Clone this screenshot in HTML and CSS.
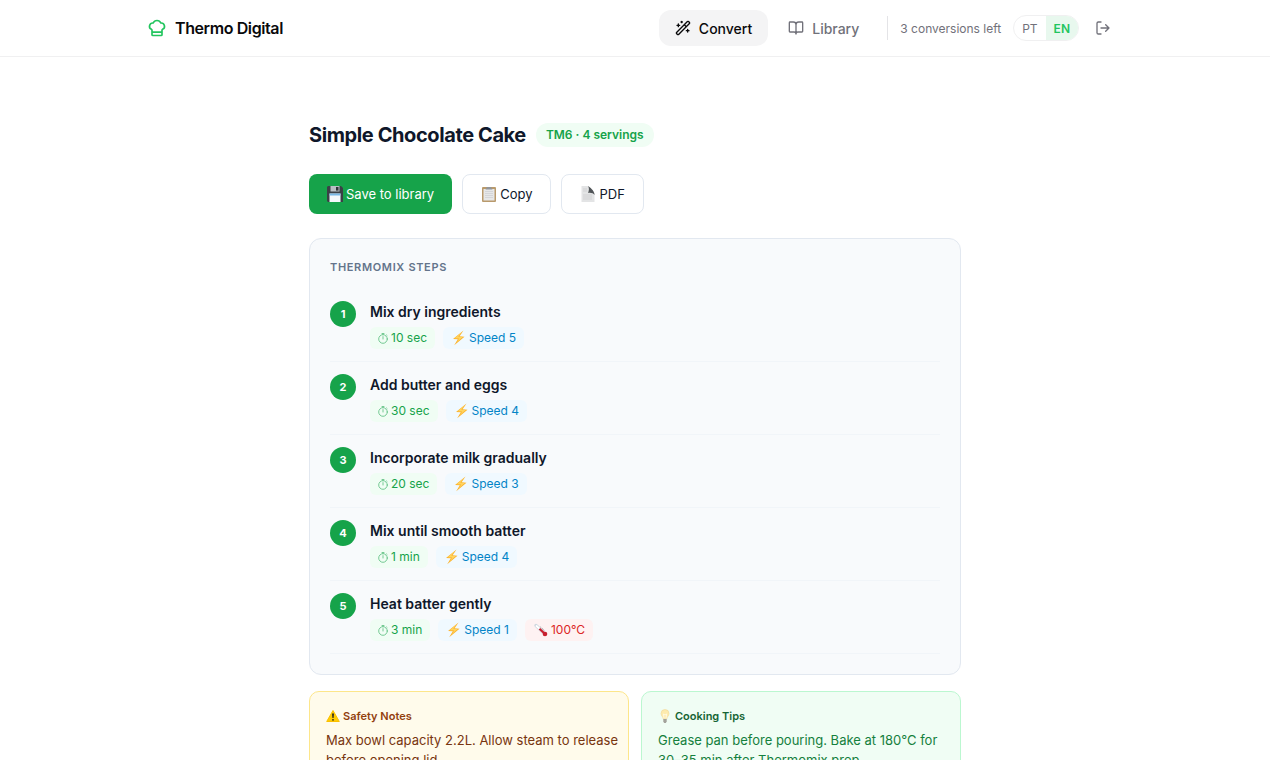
FILE: index.html
```
<!DOCTYPE html>
<html lang="en">
<head>
    <meta charset="UTF-8">
    <meta name="viewport" content="width=device-width, initial-scale=1.0">
    <title>Thermo Digital</title>
    <link rel="stylesheet" href="styles.css">
</head>
<body>
    <!-- Shared icons -->
    <svg class="sprite" aria-hidden="true">
        <symbol id="timer" viewBox="0 0 10 11">
            <g fill="none" stroke="#16a34a" stroke-width="0.8" stroke-linecap="round">
                <circle cx="5" cy="6" r="4.3"/>
                <path d="M5 3.600v2.400M4 .600h2M5 .600v1M8.600 2l.5.5"/>
            </g>
        </symbol>
        <symbol id="bolt" viewBox="0 0 15 16">
            <path d="M12.500 .500 2 8.900l4.800.4L3.200 15.300 13.500 6.800l-4.900-.5z" fill="#fcb22c"/>
            <path d="M11.200 2 3.600 8.300l4.600.3L5.400 12.500l6.400-5.400-4.600-.3z" fill="#ffd45e"/>
        </symbol>
    </svg>

    <header class="header">
        <div class="header-inner">
            <a class="brand" href="#">
                <svg class="brand-icon" viewBox="0 0 24 24"><path d="M17 21a1 1 0 0 0 1-1v-5.35c0-.457.316-.844.727-1.041a4 4 0 0 0-2.134-7.589 5 5 0 0 0-9.186 0 4 4 0 0 0-2.134 7.588c.411.198.727.585.727 1.041V20a1 1 0 0 0 1 1ZM6 17h12"/></svg>
                Thermo Digital
            </a>
            <nav class="nav">
                <a class="nav-link active" href="#">
                    <svg class="icon" viewBox="0 0 24 24"><path d="m21.64 3.64-1.28-1.28a1.21 1.21 0 0 0-1.72 0L2.36 18.64a1.21 1.21 0 0 0 0 1.72l1.28 1.28a1.2 1.2 0 0 0 1.72 0L21.64 5.36a1.2 1.2 0 0 0 0-1.72M14 7l3 3M5 6v4M19 14v4M10 2v2M7 8H3M21 16h-4M11 3H9"/></svg>
                    Convert
                </a>
                <a class="nav-link" href="#">
                    <svg class="icon" viewBox="0 0 24 24"><path d="M12 7v14M3 18a1 1 0 0 1-1-1V4a1 1 0 0 1 1-1h5a4 4 0 0 1 4 4 4 4 0 0 1 4-4h5a1 1 0 0 1 1 1v13a1 1 0 0 1-1 1h-6a3 3 0 0 0-3 3 3 3 0 0 0-3-3z"/></svg>
                    Library
                </a>
                <div class="account">
                    <span class="quota">3 conversions left</span>
                    <div class="lang">
                        <button type="button">PT</button>
                        <button type="button" class="selected">EN</button>
                    </div>
                </div>
                <button class="logout" type="button" aria-label="Log out">
                    <svg class="icon" viewBox="0 0 24 24"><path d="M9 21H5a2 2 0 0 1-2-2V5a2 2 0 0 1 2-2h4M16 17l5-5-5-5M21 12H9"/></svg>
                </button>
            </nav>
        </div>
    </header>

    <main class="main">
        <div class="title-row">
            <h1>Simple Chocolate Cake</h1>
            <span class="badge">TM6 · 4 servings</span>
        </div>

        <div class="actions">
            <button class="btn btn-primary" type="button">
                <svg class="emoji" viewBox="0 0 16 16">
                    <path d="M1 0h13l2 2v14H1L0 15V1z" fill="#3b4046"/>
                    <path d="M3.500 0h9v5.500h-9z" fill="#b9bec4"/>
                    <path d="M9 1h2.500v3.600H9z" fill="#30343a"/>
                    <path d="M2.500 7.500h11V16h-11z" fill="#f4f8fb"/>
                    <path d="M2.500 7.500h11v2h-11z" fill="#79b8e6"/>
                </svg>
                Save to library
            </button>
            <button class="btn" type="button">
                <svg class="emoji" viewBox="0 0 16 16">
                    <rect x="1" y="1" width="14" height="15" rx="1" fill="#b99a6c"/>
                    <path d="M2.500 3h11v11.500h-11z" fill="#e6e7e8"/>
                    <path d="M4 5.500h8M4 7.500h8M4 9.500h8M4 11.500h8" stroke="#cfd1d3" stroke-width="0.8"/>
                    <path d="M4.500 3.500 6 1h4l1.500 2.500z" fill="#92959a"/>
                </svg>
                Copy
            </button>
            <button class="btn" type="button">
                <svg class="emoji" viewBox="0 0 16 16">
                    <path d="M1.500 0H8l6.500 7v9h-13z" fill="#e3e4e5"/>
                    <path d="M3 3h4M3 5h4M3 9h9M3 11h9M3 13h9" stroke="#c8cacc" stroke-width="0.7"/>
                    <path d="M8 0c1.500 2 1 5 0 7 2.500-.5 5.500 0 6.500 2 .2-3-2.500-6.500-6.500-9z" fill="#505457"/>
                </svg>
                PDF
            </button>
        </div>

        <section class="steps">
            <h2>Thermomix Steps</h2>
            <div class="step">
                <div class="step-number">1</div>
                <div>
                    <h3>Mix dry ingredients</h3>
                    <div class="tags">
                        <span class="tag time"><svg><use href="#timer"/></svg>10 sec</span>
                        <span class="tag speed"><svg><use href="#bolt"/></svg>Speed 5</span>
                    </div>
                </div>
            </div>
            <div class="step">
                <div class="step-number">2</div>
                <div>
                    <h3>Add butter and eggs</h3>
                    <div class="tags">
                        <span class="tag time"><svg><use href="#timer"/></svg>30 sec</span>
                        <span class="tag speed"><svg><use href="#bolt"/></svg>Speed 4</span>
                    </div>
                </div>
            </div>
            <div class="step">
                <div class="step-number">3</div>
                <div>
                    <h3>Incorporate milk gradually</h3>
                    <div class="tags">
                        <span class="tag time"><svg><use href="#timer"/></svg>20 sec</span>
                        <span class="tag speed"><svg><use href="#bolt"/></svg>Speed 3</span>
                    </div>
                </div>
            </div>
            <div class="step">
                <div class="step-number">4</div>
                <div>
                    <h3>Mix until smooth batter</h3>
                    <div class="tags">
                        <span class="tag time"><svg><use href="#timer"/></svg>1 min</span>
                        <span class="tag speed"><svg><use href="#bolt"/></svg>Speed 4</span>
                    </div>
                </div>
            </div>
            <div class="step">
                <div class="step-number">5</div>
                <div>
                    <h3>Heat batter gently</h3>
                    <div class="tags">
                        <span class="tag time"><svg><use href="#timer"/></svg>3 min</span>
                        <span class="tag speed"><svg><use href="#bolt"/></svg>Speed 1</span>
                        <span class="tag temp">
                            <svg viewBox="0 0 15 16">
                                <path d="m3 3.500 8 7.500" stroke="#cfd8df" stroke-width="3.400" stroke-linecap="round"/>
                                <path d="m3.500 4 7 6.500" stroke="#fff" stroke-width="1.800" stroke-linecap="round"/>
                                <path d="m6.500 6.700 5 4.800" stroke="#c8202f" stroke-width="2.200"/>
                                <circle cx="12" cy="12" r="2.300" fill="#c8202f"/>
                                <path d="m7.500 5 4.500 4" stroke="#59616a" stroke-width="0.7" stroke-dasharray="1 1"/>
                            </svg>100°C
                        </span>
                    </div>
                </div>
            </div>
        </section>

        <div class="notes">
            <section class="note safety">
                <h2>
                    <svg viewBox="0 0 14 14">
                        <path d="M7 1.500 13.300 12.500H.700z" fill="#ffcc05" stroke="#fbc000" stroke-linejoin="round"/>
                        <path d="M6 4.500h2l-.4 4.500H6.400z" fill="#2c2a20"/>
                        <circle cx="7" cy="10.800" r="0.900" fill="#2c2a20"/>
                    </svg>
                    Safety Notes
                </h2>
                <p>Max bowl capacity 2.2L. Allow steam to release before opening lid.</p>
            </section>
            <section class="note tips">
                <h2>
                    <svg viewBox="0 0 14 14">
                        <path d="M7 .500a4 4 0 0 0-4 4c0 2.500 2 3 2.300 5.500h3.400C9 7.500 11 7 11 4.500a4 4 0 0 0-4-4z" fill="#fdebae" stroke="#f1d797" stroke-width="0.6"/>
                        <path d="M6 9.500 5.500 5l1.500 1 1.500-1L8 9.500" fill="none" stroke="#fffbe8" stroke-width="0.9"/>
                        <path d="M5.300 10h3.400v2.500L7.800 14H6.200l-.9-1.500z" fill="#a3a29b"/>
                    </svg>
                    Cooking Tips
                </h2>
                <p>Grease pan before pouring. Bake at 180°C for 30–35 min after Thermomix prep.</p>
            </section>
        </div>
    </main>
</body>
</html>
```

FILE: styles.css
```
* {
    box-sizing: border-box;
}
body {
    margin: 0;
    background-color: white;
    color: #0f172a;
    font-family: Inter, "Liberation Sans", sans-serif;
}
h1, h2, h3, p {
    margin: 0;
}
a {
    color: inherit;
    text-decoration: none;
}
button {
    font-family: inherit;
    cursor: pointer;
}
.sprite {
    display: none;
}

/* Header */
.header {
    border-bottom: 1px solid #f0f0f1;
}
.header-inner {
    display: flex;
    align-items: center;
    justify-content: space-between;
    max-width: 1024px;
    height: 56px;
    margin: 0 auto;
    padding: 0 24px;
}
.brand {
    display: flex;
    align-items: center;
    gap: 8px;
    color: #09090b;
    font-size: 16px;
    font-weight: 600;
    letter-spacing: -0.025em;
}
.brand-icon, .icon {
    width: 16px;
    height: 16px;
    fill: none;
    stroke: currentColor;
    stroke-width: 2;
    stroke-linecap: round;
    stroke-linejoin: round;
}
.brand-icon {
    width: 20px;
    height: 20px;
    color: #22c55e;
}
.nav {
    display: flex;
    align-items: center;
    gap: 4px;
}
.nav-link {
    display: flex;
    align-items: center;
    gap: 8px;
    height: 36px;
    padding: 0 16px;
    border-radius: 12px;
    color: #71717a;
    font-size: 14px;
    font-weight: 500;
}
.nav-link.active {
    background-color: #f4f4f5;
    color: #09090b;
}
.account {
    display: flex;
    align-items: center;
    gap: 12px;
    height: 24px;
    margin-left: 8px;
    padding-left: 12px;
    border-left: 1px solid #e4e4e7;
}
.quota {
    color: #71717a;
    font-size: 12px;
}
.lang {
    display: flex;
    overflow: hidden;
    border: 1px solid #f0f0f1;
    border-radius: 13px;
}
.lang button {
    height: 24px;
    padding: 0 8px;
    border: 0;
    background: none;
    color: #71717a;
    font-size: 12px;
}
.lang .selected {
    background-color: #e8f8ee;
    color: #22c55e;
    font-weight: 600;
}
.logout {
    display: flex;
    padding: 10px 12px;
    border: 0;
    background: none;
    color: #71717a;
}

/* Recipe */
.main {
    max-width: 700px;
    margin: 0 auto;
    padding: 64px 24px;
}
.title-row {
    display: flex;
    align-items: center;
    gap: 10px;
    margin-bottom: 25px;
}
h1 {
    font-size: 20px;
    font-weight: 700;
    line-height: 28px;
    letter-spacing: -0.02em;
}
.badge {
    padding: 4px 10px;
    border-radius: 12px;
    background-color: #f0fdf4;
    color: #16a34a;
    font-size: 12px;
    font-weight: 600;
    line-height: 16px;
}
.actions {
    display: flex;
    gap: 10px;
    margin-bottom: 24px;
}
.btn {
    display: flex;
    align-items: center;
    gap: 3px;
    height: 40px;
    padding: 0 18px;
    border: 1px solid #e2e8f0;
    border-radius: 8px;
    background-color: white;
    color: #0f172a;
    font-size: 13px;
}
.btn-primary {
    border: 0;
    background-color: #16a34a;
    color: white;
}
.emoji {
    width: 16px;
    height: 16px;
}

/* Steps */
.steps {
    margin-bottom: 16px;
    padding: 20px;
    border: 1px solid #e2e8f0;
    border-radius: 12px;
    background-color: #f8fafc;
}
.steps h2 {
    margin-bottom: 14px;
    color: #64748b;
    font-size: 11px;
    font-weight: 600;
    line-height: 16px;
    letter-spacing: 0.06em;
    text-transform: uppercase;
}
.step {
    display: flex;
    align-items: flex-start;
    gap: 14px;
    padding: 12px 0;
    border-bottom: 1px solid #f1f5f9;
}
.step-number {
    width: 26px;
    height: 26px;
    border-radius: 50%;
    background-color: #16a34a;
    color: white;
    font-size: 11px;
    font-weight: 700;
    line-height: 26px;
    text-align: center;
}
h3 {
    margin-bottom: 4px;
    font-size: 14px;
    font-weight: 600;
    line-height: 22px;
}
.tags {
    display: flex;
    gap: 8px;
}
.tag {
    display: flex;
    align-items: center;
    gap: 3px;
    padding: 3px 8px;
    border-radius: 6px;
    font-size: 12px;
    line-height: 16px;
}
.tag svg {
    width: 15px;
    height: 16px;
}
.time {
    background-color: #f0fdf4;
    color: #16a34a;
}
.tag.time svg {
    width: 10px;
    height: 11px;
    opacity: 0.7;
}
.speed {
    background-color: #f0f9ff;
    color: #0284c7;
}
.temp {
    background-color: #fef2f2;
    color: #dc2626;
}

/* Notes */
.notes {
    display: grid;
    grid-template-columns: 1fr 1fr;
    gap: 12px;
}
.note {
    padding: 16px 8px 16px 16px;
    border: 1px solid;
    border-radius: 10px;
}
.note h2 {
    display: flex;
    align-items: center;
    gap: 3px;
    margin-bottom: 6px;
    font-size: 11px;
    font-weight: 600;
    line-height: 16px;
}
.note svg {
    width: 14px;
    height: 14px;
}
.note p {
    font-size: 13px;
    line-height: 20px;
}
.safety {
    border-color: #fde68a;
    background-color: #fffbeb;
    color: #78350f;
}
.safety h2 {
    color: #92400e;
}
.tips {
    border-color: #bbf7d0;
    background-color: #f0fdf4;
    color: #15803d;
}
.tips h2 {
    color: #166534;
}
```
